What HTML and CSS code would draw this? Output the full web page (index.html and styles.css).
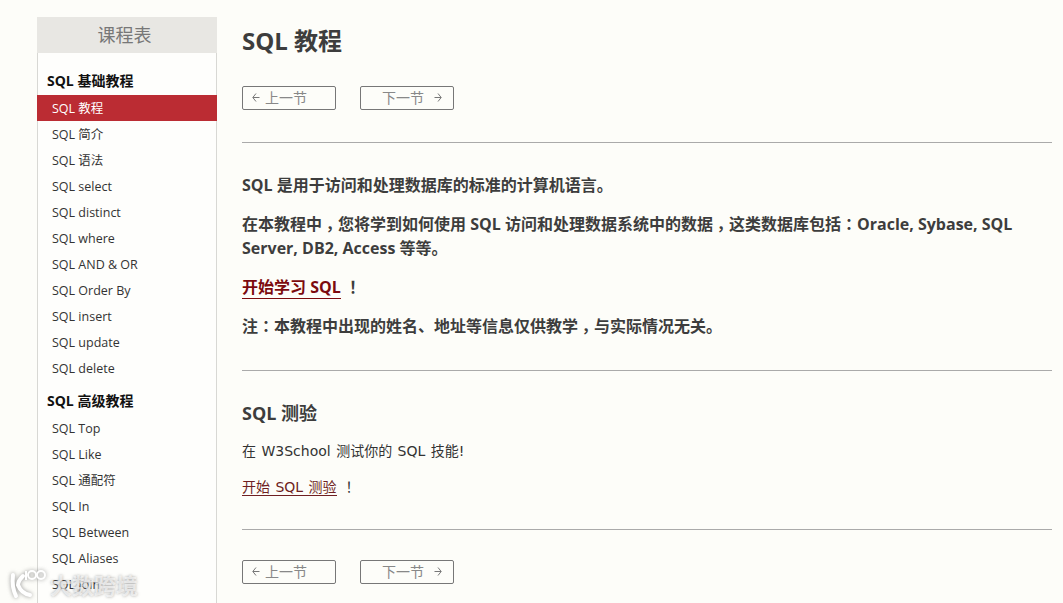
FILE: index.html
```html
<!DOCTYPE html>
<html lang="zh-CN">
<head>
    <meta charset="UTF-8">
    <title>SQL 教程</title>
    <link rel="stylesheet" href="styles.css">
</head>
<body>
    <div class="wrapper">
        <div class="sidebar">
            <h2 class="sidebar-title">课程表</h2>
            <h3 class="group-title">SQL 基础教程</h3>
            <ul class="course-list">
                <li class="current"><a href="#">SQL 教程</a></li>
                <li><a href="#">SQL 简介</a></li>
                <li><a href="#">SQL 语法</a></li>
                <li><a href="#">SQL select</a></li>
                <li><a href="#">SQL distinct</a></li>
                <li><a href="#">SQL where</a></li>
                <li><a href="#">SQL AND &amp; OR</a></li>
                <li><a href="#">SQL Order By</a></li>
                <li><a href="#">SQL insert</a></li>
                <li><a href="#">SQL update</a></li>
                <li><a href="#">SQL delete</a></li>
            </ul>
            <h3 class="group-title">SQL 高级教程</h3>
            <ul class="course-list">
                <li><a href="#">SQL Top</a></li>
                <li><a href="#">SQL Like</a></li>
                <li><a href="#">SQL 通配符</a></li>
                <li><a href="#">SQL In</a></li>
                <li><a href="#">SQL Between</a></li>
                <li><a href="#">SQL Aliases</a></li>
                <li><a href="#">SQL Join</a></li>
            </ul>
        </div>
        <div class="content">
            <h1>SQL 教程</h1>
            <div class="pager">
                <a class="pager-btn prev" href="#">
                    <svg width="8" height="9" viewBox="0 0 8 9"><path d="M4 .5 .8 4.5 4 8.5M1 4.5h6.5" fill="none" stroke="#777" stroke-width="1"/></svg>
                    上一节
                </a>
                <a class="pager-btn next" href="#">
                    下一节
                    <svg width="8" height="9" viewBox="0 0 8 9"><path d="M4 .5 7.2 4.5 4 8.5M7 4.5H.5" fill="none" stroke="#777" stroke-width="1"/></svg>
                </a>
            </div>
            <hr>
            <div class="section intro">
                <p>SQL 是用于访问和处理数据库的标准的计算机语言。</p>
                <p>在本教程中<span class="mid comma" lang="zh-Hant">，</span>您将学到如何使用 SQL 访问和处理数据系统中的数据<span class="mid comma" lang="zh-Hant">，</span>这类数据库包括<span class="mid" lang="zh-Hant">：</span>Oracle, Sybase, SQL Server, DB2, Access 等等。</p>
                <p><a href="#">开始学习 SQL</a> <span class="mid" lang="zh-Hant">！</span></p>
                <p>注<span class="mid" lang="zh-Hant">：</span>本教程中出现的姓名、地址等信息仅供教学<span class="mid comma" lang="zh-Hant">，</span>与实际情况无关。</p>
            </div>
            <hr>
            <div class="section quiz">
                <h2>SQL 测验</h2>
                <p>在 W3School 测试你的 SQL 技能!</p>
                <p><a href="#">开始 SQL 测验</a> <span class="mid" lang="zh-Hant">！</span></p>
            </div>
            <hr>
            <div class="pager pager-bottom">
                <a class="pager-btn prev" href="#">
                    <svg width="8" height="9" viewBox="0 0 8 9"><path d="M4 .5 .8 4.5 4 8.5M1 4.5h6.5" fill="none" stroke="#777" stroke-width="1"/></svg>
                    上一节
                </a>
                <a class="pager-btn next" href="#">
                    下一节
                    <svg width="8" height="9" viewBox="0 0 8 9"><path d="M4 .5 7.2 4.5 4 8.5M7 4.5H.5" fill="none" stroke="#777" stroke-width="1"/></svg>
                </a>
            </div>
        </div>
    </div>
    <div class="watermark">
        <svg width="38" height="32" viewBox="0 0 38 32"><path d="M4 7c-1 8 0 15 3 21M14 8c-3 3-5 6-5 9 2 5 6 9 12 10" fill="none" stroke="#fff" stroke-width="4" stroke-linecap="round"/><path d="M17 3v9" fill="none" stroke="#fff" stroke-width="2"/><circle cx="23" cy="7" r="4" fill="none" stroke="#fff" stroke-width="2"/><circle cx="32" cy="7" r="4" fill="none" stroke="#fff" stroke-width="2"/></svg>
        <span>大数跨境</span>
    </div>
</body>
</html>
```

FILE: styles.css
```css
html, body {
    margin: 0;
    padding: 0;
    height: 100%;
    overflow: hidden;
}

body {
    background-color: #fdfdf9;
    color: #333;
    font-family: "Open Sans", "Noto Sans CJK SC", sans-serif;
}

a {
    text-decoration: none;
}

/* traditional CJK font centres the fullwidth punctuation */
.mid {
    font-family: "Noto Sans CJK TC", sans-serif;
    line-height: 0;
}

.comma {
    vertical-align: -5px;
}

.wrapper {
    display: flex;
    align-items: flex-start;
    padding: 17px 11px 0 37px;
    height: 586px;
    overflow: hidden;
}

.sidebar {
    width: 180px;
    flex-shrink: 0;
    box-sizing: border-box;
    height: 586px;
    background-color: #fefefc;
    border-left: 1px solid #d8d8d4;
    border-right: 1px solid #d8d8d4;
}

.sidebar-title {
    margin: 0 -1px;
    padding-right: 5px;
    height: 36px;
    line-height: 37px;
    background-color: #e8e7e3;
    color: #777;
    font-size: 18px;
    font-weight: 400;
    text-align: center;
}

.group-title {
    margin: 0;
    padding: 15px 0 0 9px;
    height: 27px;
    line-height: 26px;
    font-size: 14px;
    font-weight: 700;
    color: #111;
}

.course-list {
    list-style: none;
    margin: 0;
    padding: 0;
}

.course-list + .group-title {
    padding-top: 7px;
    height: 27px;
}

.course-list li {
    height: 26px;
    line-height: 28px;
    padding-left: 14px;
    font-size: 12.5px;
}

.course-list a {
    color: #333;
}

.course-list .current {
    margin: 0 -1px;
    padding-left: 15px;
    background-color: #bb2c33;
}

.course-list .current a {
    color: #fff;
}

.content {
    flex: 1;
    margin-left: 25px;
}

.content h1 {
    margin: 5px 0 0;
    font-size: 24px;
    line-height: 38px;
    font-weight: 700;
    color: #3d3d3d;
}

.pager {
    display: flex;
    gap: 24px;
    margin-top: 26px;
}

.pager-bottom {
    margin-top: 30px;
}

.pager-btn {
    display: flex;
    align-items: center;
    box-sizing: border-box;
    width: 94px;
    height: 24px;
    padding-bottom: 2px;
    border: 1px solid #777;
    border-radius: 2px;
    font-size: 14px;
    color: #888;
    gap: 5px;
}

.pager-btn.prev {
    padding-left: 9px;
}

.pager-btn.next {
    padding-left: 21px;
    gap: 10px;
}

.content hr {
    border: 0;
    border-top: 1px solid #aaa;
    margin: 32px 0 0;
}

.section p {
    margin: 0;
}

.intro {
    padding: 30px 0 32px;
    font-size: 16px;
    font-weight: 700;
    line-height: 24px;
    color: #3d3d3d;
}

.intro p {
    margin-bottom: 15px;
}

.intro p:last-child {
    margin-bottom: 0;
}

.intro a {
    color: #7c0a0e;
    border-bottom: 1px solid #7c0a0e;
}

.content .intro + hr {
    margin-top: 0;
}

.quiz {
    padding: 30px 0 0;
    font-family: "DejaVu Sans", "Noto Sans CJK SC", sans-serif;
    font-size: 14px;
    line-height: 20px;
    word-spacing: 1px;
}

.quiz h2 {
    margin: 0 0 16px;
    font-family: "Open Sans", "Noto Sans CJK SC", sans-serif;
    font-size: 18px;
    line-height: 24px;
    color: #3d3d3d;
    word-spacing: 0;
}

.quiz p {
    margin-bottom: 16px;
}

.quiz a {
    color: #6f1f22;
    border-bottom: 1px solid #6f1f22;
}

.content .quiz + hr {
    margin-top: 32px;
}

.watermark {
    position: absolute;
    left: 9px;
    top: 568px;
    display: flex;
    align-items: center;
    gap: 3px;
    color: rgba(255, 255, 255, 0.65);
    font-family: "Noto Sans CJK SC", sans-serif;
    font-size: 22px;
    font-weight: 700;
    line-height: 32px;
    text-shadow: 0 0 3px rgba(110, 110, 110, 0.6);
}

.watermark svg {
    filter: drop-shadow(0 0 2px rgba(110, 110, 110, 0.7));
}
```
